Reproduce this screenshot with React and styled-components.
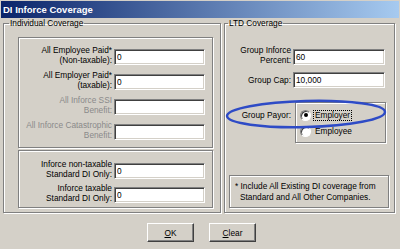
import React from 'react';
import styled, { createGlobalStyle } from 'styled-components';

const GlobalStyle = createGlobalStyle`
  html, body {
    margin: 0;
    padding: 0;
    background: #d4d0c8;
  }
  body {
    font-family: "Liberation Sans", Arial, sans-serif;
    font-size: 8.3px;
    color: #000;
  }
`;

const Window = styled.div`
  position: relative;
  width: 400px;
  height: 249px;
  background: #d4d0c8;
  display: flex;
  flex-direction: column;
  overflow: hidden;
`;

const TitleBar = styled.div`
  margin: 1px 1px 0;
  height: 17px;
  padding-left: 2px;
  display: flex;
  align-items: center;
  background: linear-gradient(to right, #0a246a, #a6caf0);
  color: #fff;
  font-weight: bold;
  font-size: 9.5px;
`;

const Content = styled.div`
  display: flex;
  flex-direction: column;
  padding: 0 3px;
`;

const Groups = styled.div`
  display: flex;
  gap: 3px;
  height: 195px;
`;

// etched group frame with caption on the top line
const Group = styled.fieldset`
  margin: 0;
  min-width: 0;
  width: ${(p) => p.$w}px;
  box-sizing: border-box;
  border: 1px solid #808080;
  box-shadow: inset 1px 1px 0 #fff, 1px 1px 0 #fff;
  padding: 9px 0 4px ${(p) => p.$pl}px;
  display: flex;
  flex-direction: column;
  align-items: flex-start;
`;

const Legend = styled.legend`
  padding: 0 1px;
  line-height: 10px;
`;

const Box = styled.div`
  width: ${(p) => p.$w}px;
  box-sizing: border-box;
  margin: ${(p) => p.$m || '0'};
  border: 1px solid #808080;
  box-shadow: inset 1px 1px 0 #fff, 1px 1px 0 #fff;
  padding: ${(p) => p.$pad};
  display: flex;
  flex-direction: column;
  gap: ${(p) => p.$gap || 0}px;
`;

const Row = styled.div`
  display: flex;
  align-items: flex-end;
  height: ${(p) => p.$h || 20}px;
  margin-top: ${(p) => p.$mt || 0}px;
`;

const Label = styled.label`
  width: ${(p) => p.$w}px;
  box-sizing: border-box;
  padding-right: 2px;
  text-align: right;
  line-height: 10px;
  white-space: nowrap;
  color: ${(p) => (p.$disabled ? '#8a8a8a' : '#000')};
  align-self: ${(p) => (p.$center ? 'center' : 'auto')};
`;

const Field = styled.input`
  width: ${(p) => p.$w}px;
  height: 16px;
  box-sizing: border-box;
  margin: 0;
  padding: 0 2px;
  border: 1px solid;
  border-color: #808080 #fff #fff #808080;
  box-shadow: inset 1px 1px 0 #404040, inset -1px -1px 0 #d4d0c8;
  background: #fff;
  font: inherit;
  color: #000;
  outline: none;
`;

const PayorRow = styled.div`
  display: flex;
  align-items: flex-start;
  margin-top: 14px;
`;

const PayorLabel = styled.span`
  width: 65px;
  box-sizing: border-box;
  padding: 8px 2px 0 0;
  text-align: right;
  line-height: 10px;
`;

const RadioBox = styled.div`
  width: 91px;
  height: 41px;
  box-sizing: border-box;
  margin-left: 2px;
  padding: 4px 0 0 4px;
  border: 1px solid #808080;
  box-shadow: inset 1px 1px 0 #fff, 1px 1px 0 #fff;
  display: flex;
  flex-direction: column;
`;

const RadioRow = styled.div`
  display: flex;
  align-items: center;
  gap: 2px;
  height: 16px;
`;

const RadioCircle = styled.span`
  width: 11px;
  height: 11px;
  box-sizing: border-box;
  border-radius: 50%;
  border: 1px solid;
  border-color: #808080 #fff #fff #808080;
  box-shadow: inset 1px 1px 0 #404040;
  background: #fff;
  display: flex;
  align-items: center;
  justify-content: center;

  &::after {
    content: '';
    width: 4px;
    height: 4px;
    border-radius: 50%;
    background: ${(p) => (p.$checked ? '#000' : 'transparent')};
  }
`;

const RadioText = styled.span`
  padding: 0 1px;
  line-height: 9px;
  border: 1px dotted ${(p) => (p.$focus ? '#000' : 'transparent')};
`;

const Note = styled.div`
  margin-top: auto;
  margin-left: 1px;
  width: 160px;
  box-sizing: border-box;
  border: 1px solid #808080;
  box-shadow: inset 1px 1px 0 #fff, 1px 1px 0 #fff;
  padding: 5px 4px 4px 10px;
  text-indent: -5px;
  line-height: 11px;
  white-space: nowrap;
`;

const ButtonRow = styled.div`
  display: flex;
  justify-content: center;
  gap: 15px;
  margin-top: 10px;
  padding-left: 3px;
`;

const Button = styled.button`
  width: 47px;
  height: 19px;
  margin: 0;
  padding: 0;
  background: #d4d0c8;
  border: 1px solid;
  border-color: #fff #404040 #404040 #fff;
  box-shadow: inset -1px -1px 0 #808080;
  font: inherit;
  color: #000;
`;

// hand-drawn highlight ring over the payor row
const Highlight = styled.svg`
  position: absolute;
  left: 224px;
  top: 98px;
  pointer-events: none;
`;

const individual = [
  { a: 'All Employee Paid*', b: '(Non-taxable):', v: '0' },
  { a: 'All Employer Paid*', b: '(taxable):', v: '0' },
  { a: 'All Inforce SSI', b: 'Benefit:', v: '', disabled: true },
  { a: 'All Inforce Catastrophic', b: 'Benefit:', v: '', disabled: true },
];

const standard = [
  { a: 'Inforce non-taxable', b: 'Standard DI Only:', v: '0' },
  { a: 'Inforce taxable', b: 'Standard DI Only:', v: '0' },
];

const FieldRow = ({ a, b, v, disabled }) => (
  <Row>
    <Label $w={95} $disabled={disabled}>
      {a}
      <br />
      {b}
    </Label>
    <Field $w={91} defaultValue={v} disabled={disabled} />
  </Row>
);

const App = () => {
  return (
    <>
      <GlobalStyle />
      <Window>
        <TitleBar>DI Inforce Coverage</TitleBar>
        <Content>
          <Groups>
            <Group $w={218} $pl={5}>
              <Legend>Individual Coverage</Legend>
              <Box $w={195} $m="0 0 0 9px" $pad="7px 0 7px 0" $gap={5}>
                {individual.map((r) => (
                  <FieldRow key={r.a} {...r} />
                ))}
              </Box>
              <Box $w={195} $m="2px 0 0 9px" $pad="8px 0 4px 0" $gap={4}>
                {standard.map((r) => (
                  <FieldRow key={r.a} {...r} />
                ))}
              </Box>
            </Group>
            <Group $w={171} $pl={3}>
              <Legend>LTD Coverage</Legend>
              <Row $mt={8}>
                <Label $w={65}>
                  Group Inforce
                  <br />
                  Percent:
                </Label>
                <Field $w={92} defaultValue="60" />
              </Row>
              <Row $h={16} $mt={7}>
                <Label $w={65} $center>
                  Group Cap:
                </Label>
                <Field $w={92} defaultValue="10,000" />
              </Row>
              <PayorRow>
                <PayorLabel>Group Payor:</PayorLabel>
                <RadioBox>
                  <RadioRow>
                    <RadioCircle $checked />
                    <RadioText $focus>Employer</RadioText>
                  </RadioRow>
                  <RadioRow>
                    <RadioCircle />
                    <RadioText>Employee</RadioText>
                  </RadioRow>
                </RadioBox>
              </PayorRow>
              <Note>
                * Include All Existing DI coverage from
                <br />
                Standard and All Other Companies.
              </Note>
            </Group>
          </Groups>
          <ButtonRow>
            <Button>
              <u>O</u>K
            </Button>
            <Button>
              <u>C</u>lear
            </Button>
          </ButtonRow>
        </Content>
        <Highlight width="166" height="34" viewBox="0 0 166 34">
          <ellipse
            cx="82"
            cy="16"
            rx="79"
            ry="13"
            fill="none"
            stroke="#2e4bc6"
            strokeWidth="2.5"
            transform="rotate(-1.5 82 16)"
          />
        </Highlight>
      </Window>
    </>
  );
};

export default App;
